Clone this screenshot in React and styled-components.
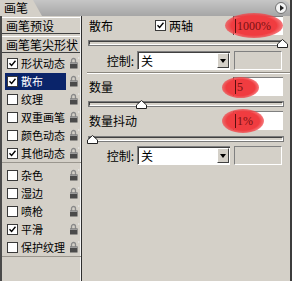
import React from 'react';
import styled, { createGlobalStyle } from 'styled-components';

const GlobalStyle = createGlobalStyle`
  body {
    margin: 0;
    background: #d4d0c8;
    font-family: "Noto Sans CJK SC", "Liberation Sans", sans-serif;
  }
`;

const Panel = styled.div`
  width: 292px;
  height: 281px;
  display: flex;
  flex-direction: column;
  background: #d4d0c8;
  border-right: 2px solid #3c3c3c;
  box-sizing: border-box;
  overflow: hidden;
  font-size: 12px;
  color: #000;
`;

const TitleBar = styled.div`
  height: 16px;
  display: flex;
  align-items: stretch;
  background: linear-gradient(#c6c6c6, #a6a6a6);
  border-top-right-radius: 8px;
`;

const Tab = styled.div`
  width: 42px;
  background: #d4d0c8;
  clip-path: polygon(0 0, 33px 0, 42px 100%, 0 100%);
  padding-left: 4px;
  line-height: 15px;
  box-sizing: border-box;
`;

const TitleSpace = styled.div`
  flex: 1;
`;

const MenuButton = styled.div`
  width: 10px;
  height: 10px;
  margin: 2px 3px 0 0;
  border-radius: 50%;
  background: #f4f4f4;
  border: 1px solid #707070;
  display: flex;
  align-items: center;
  justify-content: center;
  &::after {
    content: '';
    border-left: 4px solid #222;
    border-top: 3px solid transparent;
    border-bottom: 3px solid transparent;
    margin-left: 1px;
  }
`;

const Body = styled.div`
  flex: 1;
  display: flex;
`;

const Sidebar = styled.div`
  width: 82px;
  display: flex;
  flex-direction: column;
  border-left: 2px solid #4a4a4a;
  border-right: 1px solid #2e2e2e;
  box-shadow: inset -1px 0 0 #f4f4f4;
  box-sizing: border-box;
  padding-top: 1px;
`;

const SideButton = styled.div`
  height: 15px;
  line-height: 15px;
  padding-left: 4px;
  margin: 0 1px ${p => p.$gap}px 0;
  border-top: 1px solid #ffffff;
  border-bottom: 1px solid #404040;
  white-space: nowrap;
`;

const Group = styled.div`
  display: flex;
  flex-direction: column;
  border-bottom: 1px solid #9a968e;
  margin-bottom: 3px;
`;

const Item = styled.div`
  height: 18px;
  display: flex;
  align-items: center;
  padding-left: 3px;
  gap: 3px;
`;

const ItemLabel = styled.div`
  width: 61px;
  height: 17px;
  display: flex;
  align-items: center;
  gap: 3px;
  padding-left: 2px;
  box-sizing: border-box;
  font-size: 11px;
  white-space: nowrap;
  background: ${p => (p.$selected ? '#0a246a' : 'transparent')};
  color: ${p => (p.$selected ? '#ffffff' : '#000')};
`;

const Box = styled.span`
  width: 9px;
  height: 9px;
  flex: none;
  background: #ffffff;
  border: 1px solid #3a3a3a;
  display: inline-flex;
  align-items: center;
  justify-content: center;
`;

const Main = styled.div`
  flex: 1;
  display: flex;
  flex-direction: column;
  padding: 0 7px 0 7px;
`;

const Row = styled.div`
  height: 19px;
  display: flex;
  align-items: center;
`;

const Label = styled.div`
  flex: 1;
  display: flex;
  align-items: center;
  white-space: nowrap;
`;

const AxisCheck = styled.div`
  display: flex;
  align-items: center;
  gap: 3px;
  margin-left: 42px;
`;

const Field = styled.div`
  position: relative;
  width: 50px;
  height: 19px;
  background: #ffffff;
  border-top: 1px solid #808080;
  border-left: 1px solid #404040;
  box-sizing: border-box;
  display: flex;
  align-items: center;
  padding-left: 1px;
  font-family: "Liberation Serif", serif;
  font-size: 12px;
  color: #7a1010;
`;

const Mark = styled.div`
  position: absolute;
  left: ${p => p.$left}px;
  top: ${p => p.$top}px;
  width: ${p => p.$w}px;
  height: ${p => p.$h}px;
  border-radius: 50%;
  background: radial-gradient(ellipse at center, #f03c40 55%, rgba(244, 80, 84, 0.55) 80%, rgba(244, 90, 94, 0) 100%);
`;

const FieldText = styled.span`
  position: relative;
  border-left: 1px solid #5a1010;
  padding-left: 1px;
  line-height: 14px;
`;

const Track = styled.div`
  position: relative;
  height: 2px;
  margin: ${p => p.$m};
  border-top: 1px solid #404040;
  border-left: 1px solid #404040;
  border-bottom: 1px solid #ffffff;
  border-right: 1px solid #ffffff;
  background: #d4d0c8;
  box-shadow: 0 0 0 1px #7a7a7a;
`;

const Thumb = styled.svg`
  position: absolute;
  top: -3px;
  left: ${p => p.$pos}px;
`;

const ControlRow = styled.div`
  height: 19px;
  display: flex;
  align-items: center;
`;

const ControlLabel = styled.div`
  width: 48px;
  text-align: right;
  padding-right: 3px;
  box-sizing: border-box;
`;

const Select = styled.div`
  width: 93px;
  height: 19px;
  background: #ffffff;
  border-top: 1px solid #808080;
  border-left: 1px solid #808080;
  border-bottom: 1px solid #ffffff;
  box-shadow: inset 1px 1px 0 #404040;
  box-sizing: border-box;
  display: flex;
  align-items: center;
  padding-left: 3px;
`;

const SelectText = styled.span`
  flex: 1;
`;

const DropButton = styled.div`
  width: 12px;
  height: 15px;
  margin-right: 1px;
  background: #d4d0c8;
  border-top: 1px solid #ffffff;
  border-left: 1px solid #ffffff;
  border-right: 1px solid #404040;
  border-bottom: 1px solid #404040;
  box-sizing: border-box;
  display: flex;
  align-items: center;
  justify-content: center;
  &::after {
    content: '';
    border-top: 4px solid #000;
    border-left: 3px solid transparent;
    border-right: 3px solid transparent;
  }
`;

const DisabledField = styled.div`
  width: 48px;
  height: 19px;
  margin-left: 4px;
  border-top: 1px solid #808080;
  border-left: 1px solid #808080;
  border-bottom: 1px solid #ffffff;
  border-right: 1px solid #ffffff;
  box-sizing: border-box;
  background: #d4d0c8;
`;

const Divider = styled.div`
  height: 0;
  margin: 2px -7px 3px -2px;
  border-top: 1px solid #8a867e;
  border-bottom: 1px solid #ffffff;
`;

const Check = () => (
  <svg width="7" height="7" viewBox="0 0 7 7">
    <path d="M0.5 3.2 L2.6 5.4 L6.5 0.8" fill="none" stroke="#000" strokeWidth="1.4" />
  </svg>
);

const CheckBox = ({ checked }) => <Box>{checked && <Check />}</Box>;

const Lock = () => (
  <svg width="11" height="12" viewBox="0 0 11 12">
    <path d="M2.5 6 V3.5 a2 2 0 0 1 4 0 V6" fill="none" stroke="#8a8a8a" strokeWidth="1.3" />
    <rect x="1" y="5.5" width="7.5" height="6" fill="#4a4a4a" />
    <rect x="1" y="5.5" width="7.5" height="1.5" fill="#9a9a9a" />
    <path d="M9 1 L10.5 1 M9.7 0.3 L9.7 1.8" stroke="#e8e8e8" strokeWidth="0.8" />
  </svg>
);

const ThumbIcon = ({ pos }) => (
  <Thumb $pos={pos} width="11" height="9" viewBox="0 0 11 9">
    <path d="M0.5 8.5 V5 L5.5 0.5 L10.5 5 V8.5 Z" fill="#ffffff" stroke="#222" strokeWidth="1" />
  </Thumb>
);

const groups = [
  [
    { name: '形状动态', checked: true },
    { name: '散布', checked: true, selected: true },
    { name: '纹理' },
    { name: '双重画笔' },
    { name: '颜色动态' },
    { name: '其他动态', checked: true },
  ],
  [
    { name: '杂色' },
    { name: '湿边' },
    { name: '喷枪' },
    { name: '平滑', checked: true },
    { name: '保护纹理' },
  ],
];

const App = () => {
  return (
    <Panel>
      <GlobalStyle />
      <TitleBar>
        <Tab>画笔</Tab>
        <TitleSpace />
        <MenuButton />
      </TitleBar>
      <Body>
        <Sidebar>
          <SideButton $gap={2}>画笔预设</SideButton>
          <SideButton $gap={1}>画笔笔尖形状</SideButton>
          {groups.map((g, gi) => (
            <Group key={gi}>
              {g.map(it => (
                <Item key={it.name}>
                  <ItemLabel $selected={it.selected}>
                    <CheckBox checked={it.checked} />
                    {it.name}
                  </ItemLabel>
                  <Lock />
                </Item>
              ))}
            </Group>
          ))}
        </Sidebar>
        <Main>
          <Row>
            <Label>
              散布
              <AxisCheck>
                <CheckBox checked />
                两轴
              </AxisCheck>
            </Label>
            <Field>
              <Mark $left={-9} $top={-4} $w={58} $h={25} />
              <FieldText>1000%</FieldText>
            </Field>
          </Row>
          <Track $m="6px 0 6px">
            <ThumbIcon pos={187} />
          </Track>
          <ControlRow>
            <ControlLabel>控制:</ControlLabel>
            <Select>
              <SelectText>关</SelectText>
              <DropButton />
            </Select>
            <DisabledField />
          </ControlRow>
          <Divider />
          <Row>
            <Label>数量</Label>
            <Field>
              <Mark $left={-12} $top={-1} $w={37} $h={21} />
              <FieldText>5</FieldText>
            </Field>
          </Row>
          <Track $m="6px 0 5px">
            <ThumbIcon pos={46} />
          </Track>
          <Row>
            <Label>数量抖动</Label>
            <Field>
              <Mark $left={-12} $top={-3} $w={42} $h={24} />
              <FieldText>1%</FieldText>
            </Field>
          </Row>
          <Track $m="7px 0 5px">
            <ThumbIcon pos={-3} />
          </Track>
          <ControlRow>
            <ControlLabel>控制:</ControlLabel>
            <Select>
              <SelectText>关</SelectText>
              <DropButton />
            </Select>
            <DisabledField />
          </ControlRow>
        </Main>
      </Body>
    </Panel>
  );
};

export default App;
